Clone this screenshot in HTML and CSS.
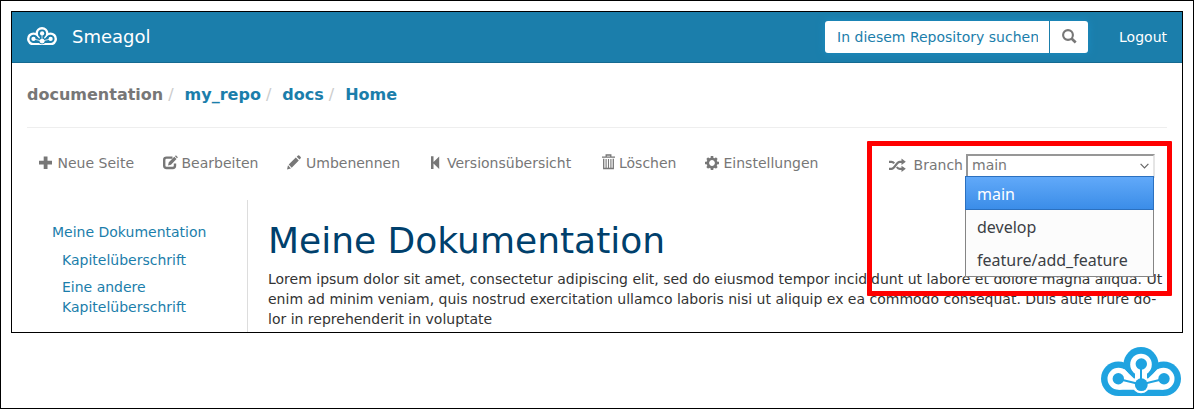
FILE: index.html
```html
<!DOCTYPE html>
<html lang="de">
<head>
<meta charset="utf-8">
<title>Smeagol</title>
<link rel="stylesheet" href="styles.css">
</head>
<body>
<svg class="defs" aria-hidden="true">
  <symbol id="cloud" viewBox="0 0 80 49">
    <g class="c-fg"><circle cx="17.300" cy="31.700" r="17.300"/><circle cx="62.700" cy="31.700" r="17.300"/><circle cx="40" cy="17.500" r="17.500"/><path d="M17.300 25h45.400v24H17.300z"/></g>
    <g class="c-bg">
      <circle cx="40" cy="17.500" r="10.800"/><circle cx="17.500" cy="31.700" r="11"/><circle cx="62.500" cy="31.700" r="11"/><circle cx="40" cy="37.500" r="8.800"/>
      <path d="M34 25h12v9H34zM17.500 42.700L23 22l10 9.500v11.200zM62.500 42.700L57 22l-10 9.500v11.200z"/>
    </g>
    <path class="c-line" d="M40 17.500V37.500M17.500 32L40 37.500L62.500 32"/>
    <g class="c-fg"><circle cx="40.300" cy="17" r="5.700"/><circle cx="17.300" cy="31.700" r="5.700"/><circle cx="63" cy="31.700" r="5.700"/><circle cx="40.300" cy="37.700" r="6.400"/></g>
  </symbol>
</svg>
<div class="page">
  <div class="app">
    <header class="navbar">
      <svg class="brand-logo"><use href="#cloud"/></svg>
      <span class="brand">Smeagol</span>
      <div class="search">
        <span class="search-input"><span class="search-text">In diesem Repository suchen</span></span>
        <span class="search-btn"><svg width="15" height="15" viewBox="0 0 15 15"><circle cx="6" cy="6" r="4.900" fill="none" stroke="currentColor" stroke-width="2.100"/><path d="M9.500 9.500L13.700 13.400" stroke="currentColor" stroke-width="2.700"/></svg></span>
      </div>
      <a class="logout">Logout</a>
    </header>
    <nav class="crumbs"><span class="root">documentation</span><i>/</i><a>my_repo</a><i>/</i><a>docs</a><i>/</i><a>Home</a></nav>
    <div class="toolbar">
      <a class="tool t1"><svg width="14" height="14" viewBox="0 0 14 14"><path d="M4.700 .5h3.800v4.300h4.500v3.700H8.500V13H4.700V8.500H0V4.800h4.700z"/></svg>Neue Seite</a>
      <a class="tool t2"><svg width="15" height="14" viewBox="0 0 15 14"><path d="M9.500 1.600H3.500Q1.200 1.600 1.200 3.900v5.900q0 2.200 2.300 2.200h6.300q2.200 0 2.200-2.200V7.500" fill="none" stroke="currentColor" stroke-width="2.400"/><path d="M5 9.500l.8-3.200 5.500-5.500 2.200 2.200L8 8.700zM12 .2l.9-.9 2 2-.9.900z"/></svg>Bearbeiten</a>
      <a class="tool t3"><svg width="14" height="14" viewBox="0 0 14 14"><path d="M0 13.500l1-4.200L3.900 12.500zM1.700 8.500l7.100-7 3 3-7.100 7.200zM9.700 .7L11-.5q.6-.4 1.200 0l1.500 1.600q.5.600 0 1.200l-1.200 1.300z"/></svg>Umbenennen</a>
      <a class="tool t4"><svg width="9" height="14" viewBox="0 0 9 14"><path d="M0 .3h2.500v5.700L8.200.5v12.400l-5.700-5.500v5.700H0z"/></svg>Versionsübersicht</a>
      <a class="tool t5"><svg class="trash" width="13" height="16" viewBox="0 0 13 16"><path d="M4.200 2.500V1h4.600v1.500M0 3.200h13M1.700 4.700v9.800h9.600v-9.800" fill="none" stroke="currentColor" stroke-width="1.300"/><path d="M4.100 5v9.500M6.500 5v9.500M8.900 5v9.500" stroke="currentColor" stroke-width="1.100"/></svg>Löschen</a>
      <a class="tool t6"><svg width="14" height="14" viewBox="-7 -7 14 14"><circle r="4.200" fill="none" stroke="currentColor" stroke-width="2.600"/><path d="M0-7v2.500M0 4.500V7M-7 0h2.500M4.500 0H7M-4.800-4.800l1.700 1.700M3.100 3.100l1.700 1.700M4.800-4.800L3.100-3.100M-3.100 3.100l-1.700 1.700" stroke="currentColor" stroke-width="2.600"/></svg>Einstellungen</a>
      <div class="branch">
        <svg width="17" height="13" viewBox="0 0 17 13"><path d="M0 2.800h2.500q1.500 0 2.700 1.600M7.800 8q1.200 1.800 2.900 1.800H14M0 9.800h2.500C6 9.800 7.200 2.800 10.700 2.800H14" fill="none" stroke="currentColor" stroke-width="2.200"/><path d="M12.500-.5L16.800 2.800 12.500 6zM12.500 6.700l4.300 3.100-4.300 3.200z"/></svg>
        <span class="branch-label">Branch</span>
        <div class="select"><span>main</span><svg width="9" height="6" viewBox="0 0 9 6"><path d="M.6.800l3.900 4 3.900-4" fill="none" stroke="#666" stroke-width="1.200"/></svg>
          <ul class="menu"><li class="active">main</li><li>develop</li><li>feature/add_feature</li></ul>
        </div>
        <div class="highlight"></div>
      </div>
    </div>
    <main class="content">
      <aside class="side"><a>Meine Dokumentation</a><a class="sub">Kapitelüberschrift</a><a class="sub">Eine andere<br>Kapitelüberschrift</a></aside>
      <article class="doc">
        <h1>Meine Dokumentation</h1>
        <p>Lorem ipsum dolor sit amet, consectetur adipiscing elit, sed do eiusmod tempor incididunt ut labore et dolore magna aliqua. Ut<br>enim ad minim veniam, quis nostrud exercitation ullamco laboris nisi ut aliquip ex ea commodo consequat. Duis aute irure do-<br>lor in reprehenderit in voluptate</p>
      </article>
    </main>
  </div>
  <svg class="footer-logo"><use href="#cloud"/></svg>
</div>
</body>
</html>
```
FILE: styles.css
```css
* { box-sizing: border-box; }
body { margin: 0; background: #fff; color: #333; font: 14px/20px "DejaVu Sans", sans-serif; }
.defs { display: none; }
.page { height: 409px; border: 1px solid #000; padding: 10px; display: flex; flex-direction: column; overflow: hidden; }
.app { height: 322px; border: 1px solid #000; display: flex; flex-direction: column; flex: none; }
.c-fg { fill: var(--fg); }
.c-bg { fill: var(--bg); }
.c-line { fill: none; stroke: var(--fg); stroke-width: 2; }
.navbar { height: 51px; flex: none; background: #1b7eab; border-bottom: 1px solid #156a91; display: flex; align-items: center; padding: 0 15px; color: #fff; }
.brand-logo { --fg: #fff; --bg: #1b7eab; width: 30px; height: 18.400px; margin-top: -2px; }
.brand { font-size: 18px; margin-left: 15px; }
.search { margin-left: auto; display: flex; height: 32px; border-radius: 3px; box-shadow: 0 0 8px #1c8dc2; background: #fff; }
.search-input { width: 225px; border-right: 1px solid #1b7eab; padding: 6px 11px 6px 12px; color: #1b7eab; }
.search-text { display: block; overflow: hidden; white-space: nowrap; }
.search-btn { width: 38px; color: #777; display: flex; align-items: center; justify-content: center; }
.search-btn svg { margin-top: -1px; }
.logout { margin-left: 31px; }
.crumbs { margin: 0 15px; height: 65px; flex: none; border-bottom: 1px solid #eee; padding-top: 21px; font-size: 16px; line-height: 22px; font-weight: bold; color: #777; white-space: nowrap; }
.crumbs a { color: #1b7eab; }
.crumbs i { display: inline-block; width: 21.400px; padding-left: 5px; font-style: normal; font-weight: normal; color: #ccc; }
.toolbar { height: 72px; flex: none; display: flex; padding: 25px 27px 0 27px; color: #777; }
.tool { display: flex; height: 20px; align-items: center; white-space: nowrap; }
.tool svg { margin-right: 4px; fill: currentColor; flex: none; overflow: visible; }
.t1 { width: 124px; }
.tool.t3 svg { margin-right: 5px; }
.tool.t1 svg, .tool.t6 svg { margin-right: 4.500px; }
.t2 { width: 124px; }
.tool.t2 svg { margin-right: 3.500px; }
.t3 { width: 144px; }
.t4 { width: 171px; }
.tool.t4 svg { margin-right: 7px; }
.t5 { width: 103px; }
.tool .trash { margin-top: -2px; margin-left: -.500px; margin-right: 4.500px; fill: none; }
.branch { margin: 1px 0 0 auto; display: flex; align-items: center; height: 24px; position: relative; }
.branch svg { fill: currentColor; overflow: visible; }
.branch > svg { margin-top: -2px; }
.branch-label { margin: -2px 3px 0 8px; }
.select { width: 189px; height: 24px; border: 2px solid; border-color: #979797 #e5e5e5 #e5e5e5 #979797; padding: 0 4px 0 4px; background: #fff; display: flex; align-items: center; justify-content: space-between; position: relative; }
.select > span { margin-top: -2px; }
.menu { position: absolute; z-index: 2; top: 20px; left: -3px; width: 189px; height: 101px; margin: 0; padding: 0; list-style: none; border: 1px solid #858585; background: #fcfcfc; font: 16px/33px "Noto Sans", sans-serif; color: #3b4045; }
.menu li { height: 33px; padding-left: 11px; line-height: 35px; }
.menu .active { height: 34px; margin: -1px -1px 0; padding-left: 11px; border: 1px solid #2b70bf; background: linear-gradient(#61a9f9, #3b8de8); color: #fff; }
.highlight { position: absolute; z-index: 3; left: -22px; top: -13px; width: 305px; height: 155px; border: 5px solid #f00; border-radius: 1px; }
.content { flex: 1; display: flex; min-height: 0; padding-left: 15px; }
.side { width: 221px; border-right: 1px solid #ddd; padding: 22px 0 0 25px; color: #1b7eab; overflow: hidden; }
.side a { display: block; margin-bottom: 8px; }
.side .sub { margin-left: 10px; margin-bottom: 7px; }
.doc { padding-left: 20px; white-space: nowrap; }
.doc h1 { margin: 21px 0 9px; font-size: 36px; line-height: 39px; font-weight: normal; color: #00406c; }
.doc p { margin: 0; }
.footer-logo { --fg: #1fa3e0; --bg: #fff; width: 80px; height: 49px; margin: 14px 2px 0 auto; flex: none; }
```
